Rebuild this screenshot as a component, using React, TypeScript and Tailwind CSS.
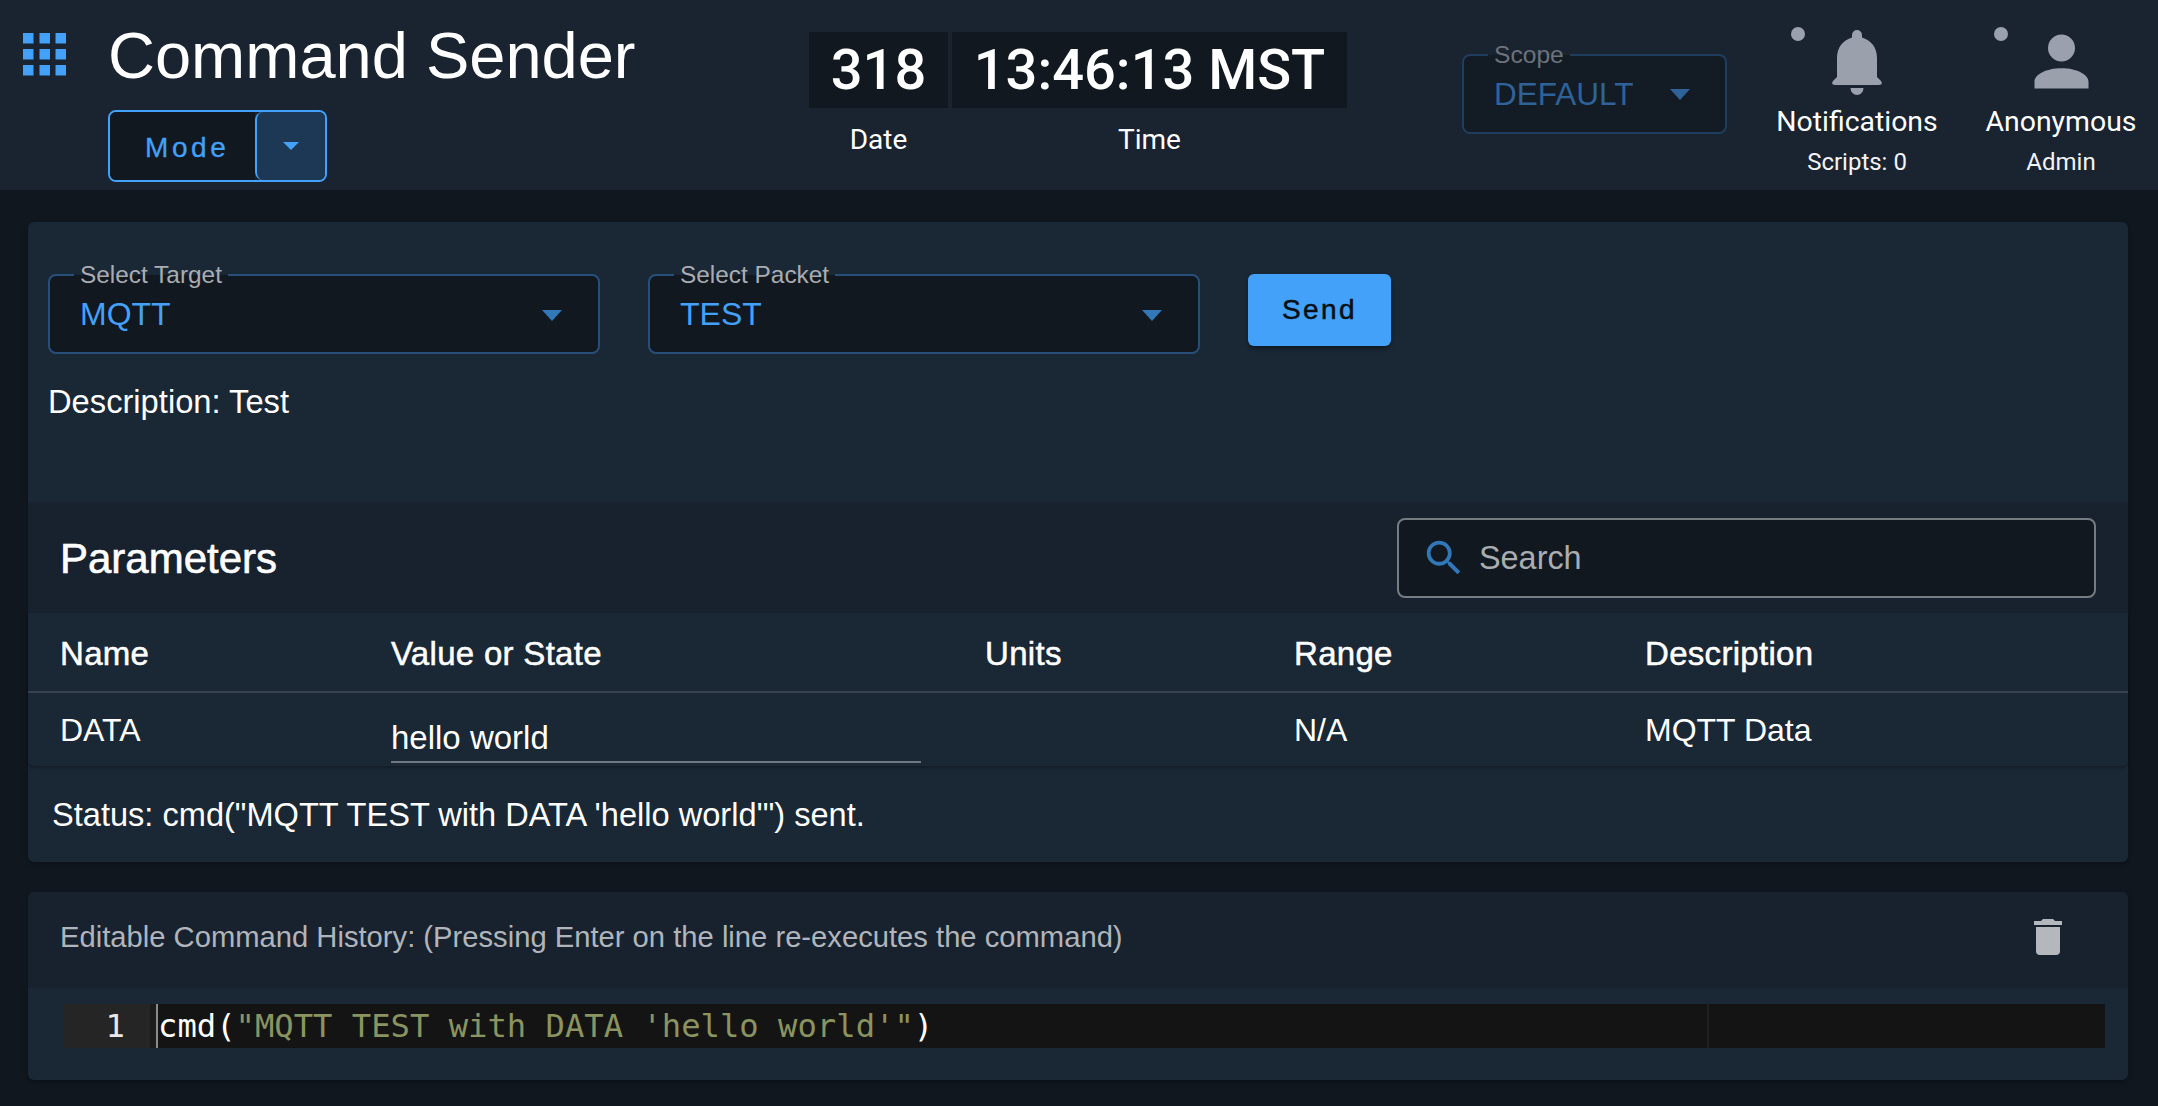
import React from "react";

const sans = "font-['Liberation_Sans',Arial,sans-serif]";
const roboto = "font-['Roboto',sans-serif]";

function Caret({ className = "" }: { className?: string }) {
  return <span className={`block w-0 h-0 border-x-[10px] border-x-transparent border-t-[11px] ${className}`} />;
}

function Select({ label, value, className = "" }: { label: string; value: string; className?: string }) {
  return (
    <div className={`relative w-[552px] h-[80px] border-2 border-[#274f7a] rounded-[8px] bg-[#111820] flex items-center pl-[30px] pr-[36px] ${className}`}>
      <span className="absolute -top-[15px] left-[24px] px-[6px] text-[24.4px] leading-[28px] text-[#a9adb2] bg-[linear-gradient(to_bottom,#1a2836_50%,#111820_50%)]">
        {label}
      </span>
      <span className="flex-1 text-[32px] leading-[40px] text-[#43a1f9]">{value}</span>
      <Caret className="border-t-[#3277b8] mt-[2px]" />
    </div>
  );
}

function HeaderItem({ title, sub, dotLeft, children, width }: { title: string; sub: string; dotLeft: string; children: React.ReactNode; width: string }) {
  return (
    <div className={`relative flex flex-col items-center pt-[21px] ${width}`}>
      <span className={`absolute top-[27px] ${dotLeft} w-[14px] h-[14px] rounded-full bg-[#9aa1ad]`} />
      {children}
      <div className="text-[28.4px] leading-[32px] text-white mt-[4px] whitespace-nowrap">{title}</div>
      <div className="text-[24px] leading-[28px] text-[#f2f3f4] mt-[10px] whitespace-nowrap">{sub}</div>
    </div>
  );
}

const cols = "grid-cols-[331px_594px_309px_351px_1fr]";

export default function App() {
  return (
    <div className={`w-[2158px] h-[1106px] overflow-hidden bg-[#10171f] ${sans} flex flex-col`}>
      <header className={`h-[190px] shrink-0 bg-[#1a2330] flex items-start ${roboto}`}>
        <svg className="ml-[23px] mt-[33px] w-[43px] h-[43px] shrink-0" viewBox="0 0 43 43" fill="#43a1f9">
          {[0, 16.5, 32.5].map((x) =>
            [0, 16, 32].map((y) => <rect key={`${x}-${y}`} x={x} y={y} width="10.5" height="10.5" />)
          )}
        </svg>
        <div className="ml-[42px] w-[522px] shrink-0">
          <h1 className={`${sans} text-[65px] leading-[64px] text-white mt-[24px] whitespace-nowrap`}>Command Sender</h1>
          <div className="mt-[22px] flex w-[219px] h-[72px] border-2 border-[#43a1f9] rounded-[8px] overflow-hidden">
            <div className={`${sans} w-[145px] bg-[#111820] flex items-center pl-[35px] pt-[4px] text-[28px] tracking-[3.6px] text-[#43a1f9] [-webkit-text-stroke:0.3px_#43a1f9]`}>Mode</div>
            <div className="flex-1 bg-[#1c3855] border-l-2 border-[#43a1f9] rounded-l-[8px] flex items-center justify-center">
              <span className="block w-0 h-0 border-x-[8px] border-x-transparent border-t-[8px] border-t-[#43a1f9]" />
            </div>
          </div>
        </div>
        <div className="ml-[179px] mt-[32px] flex gap-[4px] shrink-0">
          <div className="w-[139px] flex flex-col items-center">
            <div className="w-full h-[76px] bg-[#111820] flex items-center justify-center text-[56px] font-medium text-white">318</div>
            <div className="mt-[16px] text-[28px] leading-[32px] text-white">Date</div>
          </div>
          <div className="w-[395px] flex flex-col items-center">
            <div className="w-full h-[76px] bg-[#111820] flex items-center justify-center text-[56px] font-medium text-white whitespace-nowrap">13:46:13 MST</div>
            <div className="mt-[16px] text-[28px] leading-[32px] text-white">Time</div>
          </div>
        </div>
        <div className={`${sans} relative ml-[115px] mt-[54px] w-[265px] h-[80px] border-2 border-[#1f3d5c] rounded-[8px] bg-[#131b25] flex items-center pl-[30px] pr-[35px] shrink-0`}>
          <span className="absolute -top-[15px] left-[24px] px-[6px] text-[24.6px] leading-[28px] text-[#6c737c] bg-[linear-gradient(to_bottom,#1a2330_50%,#131b25_50%)]">Scope</span>
          <span className="flex-1 text-[31.5px] leading-[40px] text-[#2e6299]">DEFAULT</span>
          <Caret className="border-t-[#2e6299]" />
        </div>
        <HeaderItem title="Notifications" sub="Scripts: 0" dotLeft="left-[14px]" width="w-[160px] ml-[50px] shrink-0">
          <svg className="mt-[9px] mb-[7px] shrink-0" width="50" height="65" viewBox="0 0 50 65" fill="#9aa1ad">
            <path d="M25 0a5 5 0 0 1 5 5v2.5C38.500 10 45 17 45 28V47L49 51Q51.500 55 47 55H3Q-1.500 55 1 51L5 47V28C5 17 11.500 10 20 7.500V5a5 5 0 0 1 5-5Z" />
            <path d="M18.500 58h13a6.500 7 0 0 1-13 0Z" />
          </svg>
        </HeaderItem>
        <HeaderItem title="Anonymous" sub="Admin" dotLeft="left-[8px]" width="w-[150px] ml-[49px] shrink-0">
          <svg className="w-[81px] h-[81px] shrink-0" viewBox="0 0 24 24" fill="#9aa1ad">
            <path d="M12,4A4,4 0 0,1 16,8A4,4 0 0,1 12,12A4,4 0 0,1 8,8A4,4 0 0,1 12,4M12,14C16.42,14 20,15.79 20,18V20H4V18C4,15.79 7.58,14 12,14Z" />
          </svg>
        </HeaderItem>
      </header>

      <main className="px-[28px] pr-[30px] pt-[32px] flex flex-col gap-[30px]">
        <section className="bg-[#1a2836] rounded-[6px] h-[640px] flex flex-col shadow-[0_2px_4px_rgba(0,0,0,0.3)]">
          <div className="h-[280px] shrink-0 px-[20px] pt-[52px]">
            <div className="flex items-start">
              <Select label="Select Target" value="MQTT" />
              <Select label="Select Packet" value="TEST" className="ml-[48px]" />
              <button className="ml-[48px] w-[143px] h-[72px] rounded-[6px] bg-[#43a1f9] text-[#0a0f14] text-[28px] tracking-[2.4px] [-webkit-text-stroke:0.5px_#0a0f14] shadow-[0_3px_4px_rgba(0,0,0,0.35)]">Send</button>
            </div>
            <p className="mt-[28px] text-[32.7px] leading-[40px] text-white">Description: Test</p>
          </div>
          <div className="h-[111px] shrink-0 bg-[#18222e] flex items-center justify-between pl-[32px] pr-[32px]">
            <h2 className="text-[42px] leading-[48px] text-white mt-[2px] [-webkit-text-stroke:0.6px_white]">Parameters</h2>
            <div className="w-[699px] h-[80px] border-2 border-[#777c82] rounded-[8px] bg-[#111820] flex items-center pl-[22px] gap-[12px]">
              <svg className="w-[46px] h-[46px] shrink-0" viewBox="0 0 24 24" fill="#3277b8">
                <path d="M9.5,3A6.5,6.5 0 0,1 16,9.5C16,11.11 15.41,12.59 14.44,13.73L14.71,14H15.5L20.5,19L19,20.5L14,15.5V14.71L13.73,14.44C12.59,15.41 11.11,16 9.5,16A6.5,6.5 0 0,1 3,9.5A6.5,6.5 0 0,1 9.5,3M9.5,5C7,5 5,7 5,9.5C5,12 7,14 9.5,14C12,14 14,12 14,9.5C14,7 12,5 9.5,5Z" />
              </svg>
              <span className="text-[32.4px] text-[#a9adb2] mt-[1px]">Search</span>
            </div>
          </div>
          <div className="h-[153px] shrink-0 rounded-b-[6px] shadow-[0_2px_3px_rgba(0,0,0,0.3)]">
            <div className={`h-[80px] pt-[3px] border-b-2 border-[#36424f] grid ${cols} items-center pl-[32px] text-[33px] tracking-[0.3px] text-white [-webkit-text-stroke:0.5px_white]`}>
              <span>Name</span>
              <span>Value or State</span>
              <span>Units</span>
              <span>Range</span>
              <span>Description</span>
            </div>
            <div className={`h-[73px] grid ${cols} items-start pl-[32px] text-[32px] leading-[40px] text-white`}>
              <span className="mt-[17px]">DATA</span>
              <div className="mt-[25px] w-[530px] h-[45px] border-b-2 border-[#6f7780] text-[33px] leading-[40px]">hello world</div>
              <span />
              <span className="mt-[17px]">N/A</span>
              <span className="mt-[17px]">MQTT Data</span>
            </div>
          </div>
          <p className="mt-[29px] pl-[24px] text-[32.6px] leading-[40px] text-white">Status: cmd("MQTT TEST with DATA 'hello world'") sent.</p>
        </section>

        <section className="bg-[#1a2836] rounded-[6px] h-[188px] flex flex-col overflow-hidden shadow-[0_2px_4px_rgba(0,0,0,0.3)]">
          <div className="h-[96px] shrink-0 bg-[#18222e] flex items-center justify-between pl-[32px] pr-[56px]">
            <span className="text-[29.2px] text-[#b0b5bb] -mt-[4px]">Editable Command History: (Pressing Enter on the line re-executes the command)</span>
            <svg className="w-[48px] h-[48px] -mt-[6px]" viewBox="0 0 24 24" fill="#b4b8bd">
              <path d="M19,4H15.5L14.5,3H9.5L8.5,4H5V6H19V4M6,19A2,2 0 0,0 8,21H16A2,2 0 0,0 18,19V7H6V19Z" />
            </svg>
          </div>
          <div className="mt-[16px] ml-[36px] mr-[23px] h-[44px] bg-[#141414] flex font-['DejaVu_Sans_Mono',monospace] text-[32.2px] leading-[44px]">
            <div className="w-[86px] shrink-0 bg-[#252525] text-[#e8e8e8] text-right pr-[25px]">1</div>
            <div className="w-[6px] shrink-0 bg-[#1c1c1c]" />
            <div className="w-[2px] shrink-0 bg-[#8a8a8a]" />
            <div className="w-[1551px] shrink-0 border-r-2 border-[#202020] whitespace-pre text-white">
              cmd(<span className="text-[#8a9461]">"MQTT TEST with DATA 'hello world'"</span>)
            </div>
          </div>
        </section>
      </main>
    </div>
  );
}
